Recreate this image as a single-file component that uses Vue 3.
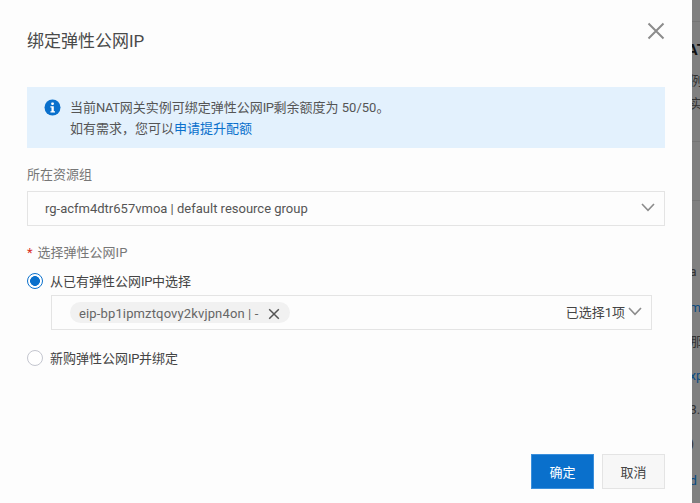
<script setup>
const strip = [
  { t: 'AT', c: 'dark', h: 20, top: 40 },
  { t: '例', c: '', h: 20, top: 11 },
  { t: '实', c: '', h: 20, top: 3 },
  { t: 'a', c: '', h: 20, top: 148 },
  { t: 'm.', c: 'link', h: 20, top: 16 },
  { t: '那', c: '', h: 20, top: 14 },
  { t: 'xp', c: 'link', h: 20, top: 14 },
  { t: '3.2', c: '', h: 20, top: 14 },
  { t: ')', c: '', h: 20, top: 14 },
  { t: 'd', c: 'link', h: 20, top: 17 }
]
</script>

<template>
  <div class="page">
    <main class="modal">
      <header class="head">
        <h1 class="title">绑定弹性公网IP</h1>
        <svg class="close" width="18" height="18" viewBox="0 0 18 18">
          <path d="M1.5 1.5 L16.5 16.5 M16.5 1.5 L1.5 16.5" stroke="#8c8c8c" stroke-width="2" fill="none" />
        </svg>
      </header>

      <section class="alert">
        <svg class="info" width="17" height="17" viewBox="0 0 17 17">
          <circle cx="8.5" cy="8.5" r="8" fill="#0a70cc" />
          <rect x="7.2" y="3.4" width="2.7" height="2.5" rx="0.8" fill="#fff" />
          <path d="M6.4 7.2 H9.8 V12.2 H11 V13.6 H6.4 V12.2 H7.5 V8.6 H6.4 Z" fill="#fff" />
        </svg>
        <div class="alert-text">
          <div>当前<span class="tight">NAT</span>网关实例可绑定弹性公网<span class="tight">IP</span>剩余额度为 50/50。</div>
          <div>如有需求，您可以<span class="link">申请提升配额</span></div>
        </div>
      </section>

      <div class="label first">所在资源组</div>
      <div class="select">
        <span>rg-acfm4dtr657vmoa | default resource group</span>
        <svg class="chev" width="14" height="9" viewBox="0 0 14 9">
          <path d="M1 1 L7 7.4 L13 1" stroke="#8c8c8c" stroke-width="1.6" fill="none" />
        </svg>
      </div>

      <div class="label second"><span class="star">*</span>选择弹性公网IP</div>
      <div class="radio-row">
        <span class="radio on"></span>
        <span>从已有弹性公网<span class="tight">IP</span>中选择</span>
      </div>
      <div class="multi">
        <span class="tag">
          <span class="tag-text">eip-bp1ipmztqovy2kvjpn4on | -</span>
          <svg class="tag-x" width="12" height="12" viewBox="0 0 12 12">
            <path d="M1.2 1.2 L10.8 10.8 M10.8 1.2 L1.2 10.8" stroke="#555" stroke-width="1.5" fill="none" />
          </svg>
        </span>
        <span class="count">已选择1项</span>
        <svg class="chev" width="14" height="9" viewBox="0 0 14 9">
          <path d="M1 1 L7 7.4 L13 1" stroke="#8c8c8c" stroke-width="1.6" fill="none" />
        </svg>
      </div>
      <div class="radio-row third">
        <span class="radio"></span>
        <span>新购弹性公网<span class="tight">IP</span>并绑定</span>
      </div>

      <footer class="foot">
        <button class="btn primary">确定</button>
        <button class="btn">取消</button>
      </footer>
    </main>
    <aside class="strip">
      <div
        v-for="(s, i) in strip"
        :key="i"
        class="frag"
        :class="s.c"
        :style="{ marginTop: s.top + 'px', height: s.h + 'px' }"
      >{{ s.t }}</div>
    </aside>
  </div>
</template>

<style>
html, body { margin: 0; background: #fff; }
</style>

<style scoped>
.page {
  width: 700px;
  height: 503px;
  display: flex;
  overflow: hidden;
  font-family: Roboto, "Noto Sans CJK SC", sans-serif;
  font-size: 13px;
  color: #555;
}
.modal {
  width: 691.5px;
  flex: none;
  box-sizing: border-box;
  padding: 0 26.5px 0 27px;
  background: #fdfdfd;
  display: flex;
  flex-direction: column;
}
.head {
  height: 87px;
  display: flex;
  justify-content: space-between;
  box-sizing: border-box;
}
.title {
  margin: 30px 0 0;
  font-size: 17px;
  line-height: 22px;
  font-weight: 400;
  color: #4a4a4a;
}
.close { margin: 22px 0 0; }
.alert {
  height: 61px;
  box-sizing: border-box;
  background: #e3f1fd;
  padding: 10px 17px;
  display: flex;
  gap: 9px;
}
.info { margin-top: 2px; flex: none; }
.alert-text { line-height: 21px; }
.tight { letter-spacing: -0.4px; }
.link { color: #0a70cc; }
.label { line-height: 18px; color: #777; }
.first { margin-top: 18px; }
.select {
  margin-top: 7px;
  height: 35px;
  box-sizing: border-box;
  border: 1px solid #e4e4e4;
  display: flex;
  align-items: center;
  justify-content: space-between;
  padding: 0 9px 0 17px;
}
.chev { margin-bottom: 2px; }
.second { margin-top: 18px; }
.star { color: #d93026; margin-right: 5px; }
.radio-row {
  margin-top: 5px;
  height: 26px;
  display: flex;
  align-items: center;
  gap: 7px;
  color: #444;
}
.radio {
  width: 16px;
  height: 16px;
  margin-top: 2px;
  box-sizing: border-box;
  border: 1px solid #c4c6cf;
  border-radius: 50%;
  background: #fff;
}
.radio.on {
  border: 1px solid #0a70cc;
  background: radial-gradient(circle, #0a70cc 0 4.6px, #fff 5.2px);
}
.multi {
  margin: 2px 13px 0 24px;
  height: 35px;
  box-sizing: border-box;
  border: 1px solid #e4e4e4;
  display: flex;
  align-items: center;
  padding: 0 9px 0 18px;
}
.tag {
  height: 21px;
  width: 220px;
  box-sizing: border-box;
  border-radius: 11px;
  background: #f1f1f1;
  display: flex;
  align-items: center;
  justify-content: space-between;
  padding: 0 10px 0 9px;
  color: #666;
}
.tag-text { letter-spacing: 0.14px; padding-top: 1px; }
.tag-x { margin-top: 2px; }
.count { margin-left: auto; margin-right: 3px; margin-bottom: 2px; color: #444; }
.third { margin-top: 14px; }
.foot {
  margin-top: auto;
  margin-bottom: 14px;
  display: flex;
  justify-content: flex-end;
  gap: 8px;
}
.btn {
  width: 63px;
  height: 35px;
  box-sizing: border-box;
  border: 1px solid #e4e4e4;
  background: #f7f7f7;
  color: #444;
  font: inherit;
  padding: 0;
}
.btn.primary { background: #0a70cc; border-color: #3a8fdc; color: #fff; }
.strip {
  flex: 1;
  background:
    linear-gradient(#757575, #757575) 0 21px / 100% 1px no-repeat,
    linear-gradient(#757575, #757575) 0 141px / 100% 1px no-repeat,
    linear-gradient(#757575, #757575) 0 200px / 100% 1px no-repeat,
    #808080;
  overflow: hidden;
  font-size: 13px;
  line-height: 20px;
  color: #333;
  white-space: nowrap;
}
.frag { margin-left: -2px; }
.frag.dark { color: #111; font-weight: 700; font-size: 15px; margin-left: -4px; }
.frag.link { color: #0a4a80; }
</style>
